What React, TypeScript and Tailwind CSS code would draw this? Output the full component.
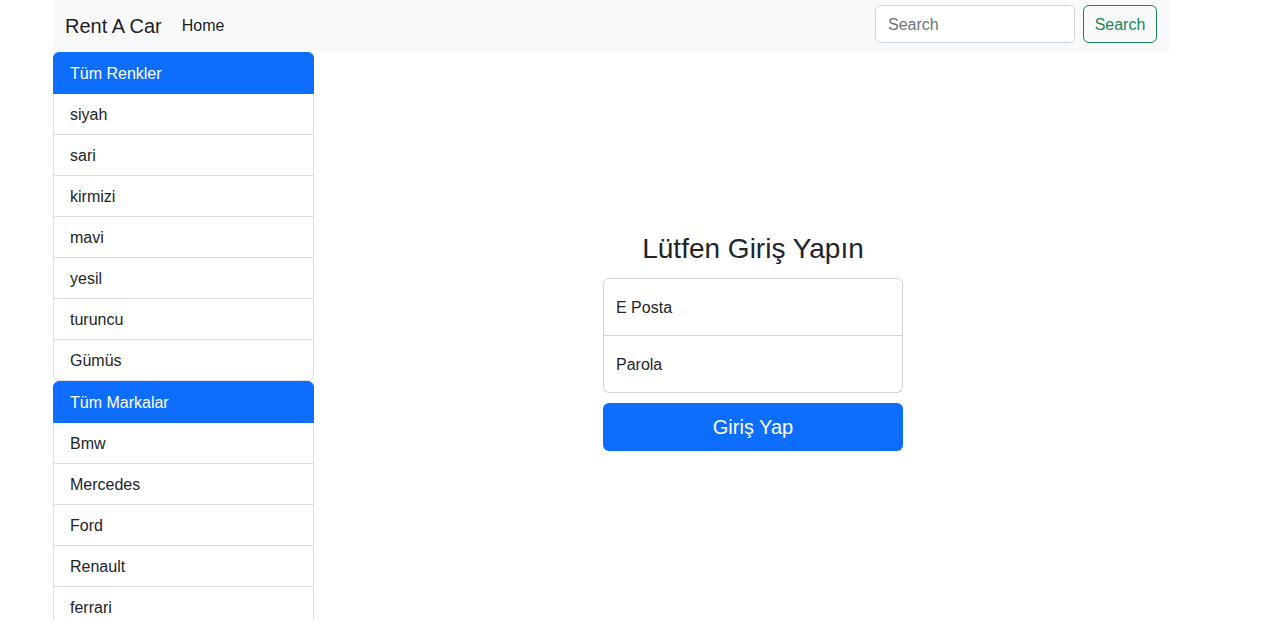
const colors = ['siyah', 'sari', 'kirmizi', 'mavi', 'yesil', 'turuncu', 'Gümüs'];
const brands = ['Bmw', 'Mercedes', 'Ford', 'Renault', 'ferrari', 'Audi', 'Toyota'];

function ListGroup({ title, items }: { title: string; items: string[] }) {
  return (
    <ul className="flex flex-col">
      <li className="rounded-t-[6px] border border-[#0d6efd] bg-[#0d6efd] px-4 pt-[9px] pb-[7px] leading-6 text-white">{title}</li>
      {items.map((item, i) => (
        <li
          key={item}
          className={
            'border border-t-0 border-[#dfdfdf] bg-white px-4 pt-[9px] pb-[7px] leading-6 text-[#212529]' +
            (i === items.length - 1 ? ' rounded-b-[6px]' : '')
          }
        >
          {item}
        </li>
      ))}
    </ul>
  );
}

export default function App() {
  return (
    <div className="min-h-screen bg-white text-base font-['Liberation_Sans',Arial,sans-serif] text-[#212529]">
      <div className="ml-[53px] w-[1116px]">
        <nav className="flex h-[52px] items-center bg-[#f8f9fa] px-3">
          <span className="mr-3 text-xl leading-[30px] text-black/90">Rent A Car</span>
          <a className="px-2 leading-6 text-black/90">Home</a>
          <form className="mb-1 ml-auto flex items-center gap-2">
            <input
              placeholder="Search"
              className="h-[38px] w-[200px] rounded-[6px] border border-[#ced4da] bg-white px-3 pt-px text-base text-[#212529] placeholder:text-[#6c757d] outline-none"
            />
            <button
              type="button"
              className="h-[38px] w-[74px] rounded-[6px] border border-[#198754] pt-px text-base text-[#198754]"
            >
              Search
            </button>
          </form>
        </nav>

        <div className="flex">
          <aside className="w-[261px] shrink-0">
            <ListGroup title="Tüm Renkler" items={colors} />
            <ListGroup title="Tüm Markalar" items={brands} />
          </aside>

          <main className="ml-[23px] flex flex-1 justify-center pt-[180px]">
            <div className="w-[300px]">
              <h1 className="mb-3 text-center text-[28px] leading-[34px]">Lütfen Giriş Yapın</h1>
              <div className="flex h-[58px] items-center rounded-t-[6px] border border-[#ced4da] px-3 pt-px text-[#212529]">E Posta</div>
              <div className="flex h-[57px] items-center rounded-b-[6px] border border-t-0 border-[#ced4da] px-3 pt-px text-[#212529]">Parola</div>
              <button
                type="button"
                className="mt-[10px] h-[48px] w-full rounded-[6px] bg-[#0d6efd] text-xl text-white"
              >
                Giriş Yap
              </button>
            </div>
          </main>
        </div>
      </div>
    </div>
  );
}
